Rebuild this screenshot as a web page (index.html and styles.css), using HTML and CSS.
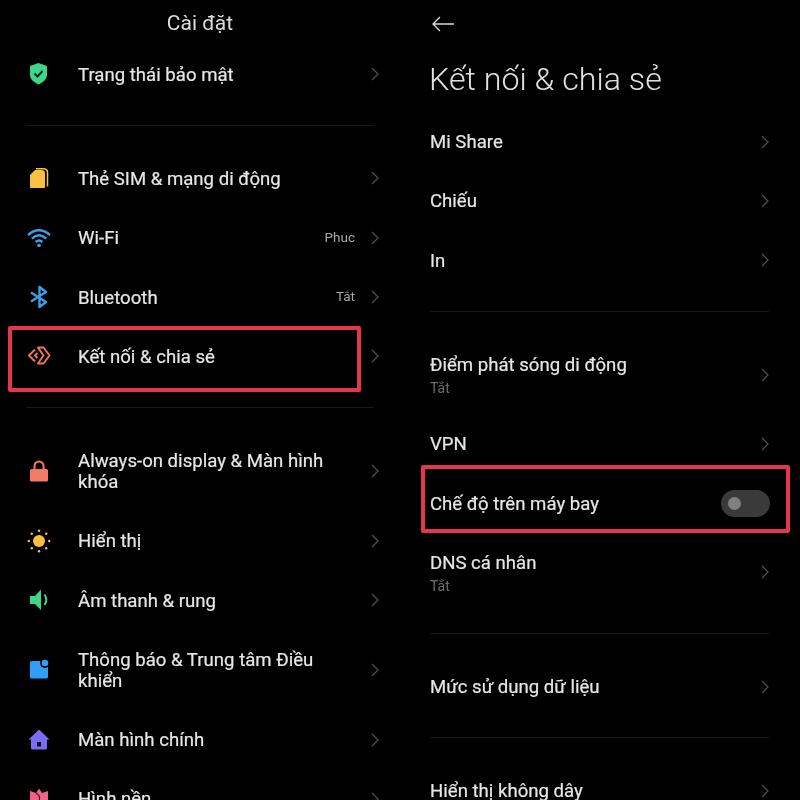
FILE: index.html
```html
<!DOCTYPE html>
<html lang="vi">

<head>
    <meta charset="UTF-8">
    <meta name="viewport" content="width=device-width, initial-scale=1.0">
    <title>Cài đặt</title>
    <link rel="stylesheet" href="styles.css">
</head>

<body>
    <div class="screens">
        <!-- Cài đặt -->
        <section class="panel panel-settings">
            <h1 class="settings-title">Cài đặt</h1>

            <div class="row">
                <svg class="icon" viewBox="0 0 24 24"><path fill="#3fd68a" d="M11.5 1 L20 4 V13 C20 17.5 15.5 20.5 11.5 22.5 C7.5 20.5 3 17.5 3 13 V4 Z"/><path fill="none" stroke="#06251a" stroke-width="2" d="M7.5 11.5 l3 3 l5 -5.5"/></svg>
                <span class="label">Trạng thái bảo mật</span>
                <svg class="chevron" viewBox="0 0 8 14"><path d="M1 1 L7 7 L1 13"/></svg>
            </div>

            <div class="divider"></div>

            <div class="row">
                <svg class="icon" viewBox="0 0 24 24"><path fill="#fbbf45" d="M8 4 H14.5 Q18 4 18 7.5 V21 Q18 22 17 22 H4 Q3 22 3 21 V9 Z"/><path fill="none" stroke="#fbbf45" stroke-width="1.5" d="M9 2.7 H17 Q20.5 3 20.5 6.5 V20.5"/></svg>
                <span class="label">Thẻ SIM &amp; mạng di động</span>
                <svg class="chevron" viewBox="0 0 8 14"><path d="M1 1 L7 7 L1 13"/></svg>
            </div>
            <div class="row">
                <svg class="icon" viewBox="0 0 24 24"><g fill="none" stroke="#3d9fe8" stroke-width="2.4"><path d="M1 9 Q12 -0.5 23 9"/><path d="M4.8 12.6 Q12 6 19.2 12.6"/><path d="M8.6 16 Q12 13 15.4 16"/></g><circle cx="12" cy="19.5" r="1.8" fill="#3d9fe8"/></svg>
                <span class="label">Wi-Fi</span>
                <span class="value">Phuc</span>
                <svg class="chevron" viewBox="0 0 8 14"><path d="M1 1 L7 7 L1 13"/></svg>
            </div>
            <div class="row">
                <svg class="icon" viewBox="0 0 24 24"><path fill="none" stroke="#3d9fe8" stroke-width="2.4" stroke-linejoin="round" d="M4 7.5 L19 17 L12.5 22 V2 L19 7 L4 16.5"/></svg>
                <span class="label">Bluetooth</span>
                <span class="value">Tắt</span>
                <svg class="chevron" viewBox="0 0 8 14"><path d="M1 1 L7 7 L1 13"/></svg>
            </div>
            <div class="row">
                <svg class="icon" viewBox="0 0 24 24"><g fill="none" stroke="#e8735f" stroke-width="2" stroke-linejoin="round"><path d="M11 3.5 H16.5 L22.5 11.5 L16.5 19.5 H11 L16.5 11.5 Z"/><path d="M8 5.5 L2 11.5 L8 17.5"/><path d="M10.5 9 L8 11.5 L10.5 14"/></g></svg>
                <span class="label">Kết nối &amp; chia sẻ</span>
                <svg class="chevron" viewBox="0 0 8 14"><path d="M1 1 L7 7 L1 13"/></svg>
                <div class="highlight highlight-share"></div>
            </div>

            <div class="divider"></div>

            <div class="row row-tall">
                <svg class="icon" viewBox="0 0 24 24"><rect x="3" y="10" width="18" height="12.5" rx="1.5" fill="#f47c67"/><path fill="none" stroke="#f47c67" stroke-width="2" d="M7.5 11 V7 a4.5 4.5 0 0 1 9 0 V11"/></svg>
                <span class="label">Always-on display &amp; Màn hình khóa</span>
                <svg class="chevron" viewBox="0 0 8 14"><path d="M1 1 L7 7 L1 13"/></svg>
            </div>
            <div class="row">
                <svg class="icon" viewBox="0 0 24 24"><circle cx="12" cy="12" r="6" fill="#fbbf45"/><g fill="#fbbf45"><circle cx="12" cy="1.8" r="1.2"/><circle cx="12" cy="22.2" r="1.2"/><circle cx="1.8" cy="12" r="1.2"/><circle cx="22.2" cy="12" r="1.2"/><circle cx="4.8" cy="4.8" r="1.2"/><circle cx="19.2" cy="4.8" r="1.2"/><circle cx="4.8" cy="19.2" r="1.2"/><circle cx="19.2" cy="19.2" r="1.2"/></g></svg>
                <span class="label">Hiển thị</span>
                <svg class="chevron" viewBox="0 0 8 14"><path d="M1 1 L7 7 L1 13"/></svg>
            </div>
            <div class="row">
                <svg class="icon" viewBox="0 0 24 24"><path fill="#3fd68a" d="M3 8 H8 L14 1.5 V22 L8 16 H3 Z"/><path fill="none" stroke="#3fd68a" stroke-width="2" d="M17.5 6.5 Q21 11.5 17.5 17"/></svg>
                <span class="label">Âm thanh &amp; rung</span>
                <svg class="chevron" viewBox="0 0 8 14"><path d="M1 1 L7 7 L1 13"/></svg>
            </div>
            <div class="row row-tall">
                <svg class="icon" viewBox="0 0 24 24"><rect x="3" y="3" width="18" height="17.5" rx="1.5" fill="#2f9ff5"/><circle cx="18" cy="5" r="5" fill="#000"/><circle cx="18" cy="5" r="3.3" fill="#2f9ff5"/></svg>
                <span class="label">Thông báo &amp; Trung tâm Điều khiển</span>
                <svg class="chevron" viewBox="0 0 8 14"><path d="M1 1 L7 7 L1 13"/></svg>
            </div>
            <div class="row">
                <svg class="icon" viewBox="0 0 24 24"><path fill="#7c6cf0" d="M12 1.5 L22.5 11.5 H20 V20 Q20 21.5 18.5 21.5 H5.5 Q4 21.5 4 20 V11.5 H1.5 Z"/><rect x="10" y="14" width="4" height="4.5" fill="#0d0a26"/></svg>
                <span class="label">Màn hình chính</span>
                <svg class="chevron" viewBox="0 0 8 14"><path d="M1 1 L7 7 L1 13"/></svg>
            </div>
            <div class="row">
                <svg class="icon" viewBox="0 0 24 24"><path fill="#f0648a" d="M3 4 L9 6 L12 1.5 L15 6 L21 4 V16 Q21 22 12 22 Q3 22 3 16 Z"/><path fill="none" stroke="#4a1526" stroke-width="1.2" d="M9 6 Q14 9 12 14"/></svg>
                <span class="label">Hình nền</span>
                <svg class="chevron" viewBox="0 0 8 14"><path d="M1 1 L7 7 L1 13"/></svg>
            </div>
        </section>

        <!-- Kết nối & chia sẻ -->
        <section class="panel panel-connect">
            <svg class="back" viewBox="0 0 22 16"><path d="M8 1 L1 8 L8 15 M1 8 H22"/></svg>
            <h2 class="connect-title">Kết nối &amp; chia sẻ</h2>

            <div class="row">
                <span class="label">Mi Share</span>
                <svg class="chevron" viewBox="0 0 8 14"><path d="M1 1 L7 7 L1 13"/></svg>
            </div>
            <div class="row">
                <span class="label">Chiếu</span>
                <svg class="chevron" viewBox="0 0 8 14"><path d="M1 1 L7 7 L1 13"/></svg>
            </div>
            <div class="row">
                <span class="label">In</span>
                <svg class="chevron" viewBox="0 0 8 14"><path d="M1 1 L7 7 L1 13"/></svg>
            </div>

            <div class="divider"></div>

            <div class="row row-sub">
                <div class="label">Điểm phát sóng di động<div class="sub">Tắt</div></div>
                <svg class="chevron" viewBox="0 0 8 14"><path d="M1 1 L7 7 L1 13"/></svg>
            </div>
            <div class="row">
                <span class="label">VPN</span>
                <svg class="chevron" viewBox="0 0 8 14"><path d="M1 1 L7 7 L1 13"/></svg>
            </div>
            <div class="row">
                <span class="label">Chế độ trên máy bay</span>
                <div class="toggle"><div class="knob"></div></div>
                <div class="highlight highlight-plane"></div>
            </div>
            <div class="row row-sub">
                <div class="label">DNS cá nhân<div class="sub">Tắt</div></div>
                <svg class="chevron" viewBox="0 0 8 14"><path d="M1 1 L7 7 L1 13"/></svg>
            </div>

            <div class="divider"></div>

            <div class="row">
                <span class="label">Mức sử dụng dữ liệu</span>
                <svg class="chevron" viewBox="0 0 8 14"><path d="M1 1 L7 7 L1 13"/></svg>
            </div>

            <div class="divider"></div>

            <div class="row">
                <span class="label">Hiển thị không dây</span>
                <svg class="chevron" viewBox="0 0 8 14"><path d="M1 1 L7 7 L1 13"/></svg>
            </div>
        </section>
    </div>
</body>

</html>
```

FILE: styles.css
```css
html,
body {
    margin: 0;
    height: 800px;
    overflow: hidden;
    background-color: #000;
}

body {
    font-family: Roboto, "Noto Sans", sans-serif;
    color: #e6e6e6;
}

/* the reference is a soft, upscaled phone capture */
.screens {
    display: grid;
    grid-template-columns: 400px 400px;
    height: 800px;
    overflow: hidden;
    filter: blur(0.4px);
}

.panel {
    display: flex;
    flex-direction: column;
    box-sizing: border-box;
}

.panel-settings {
    padding: 0 21px 0 27px;
}

.panel-connect {
    padding: 0 31px 0 30px;
}

.settings-title {
    margin: 0 6px 0 0;
    height: 44.6px;
    line-height: 46px;
    font-size: 21px;
    font-weight: 400;
    text-align: center;
    color: #dcdcdc;
    flex-shrink: 0;
}

.back {
    width: 22px;
    height: 16px;
    margin: 16px 0 0 2px;
    flex-shrink: 0;
    fill: none;
    stroke: #d8d8d8;
    stroke-width: 1.4;
}

.connect-title {
    box-sizing: border-box;
    margin: 0 0 0 -1px;
    height: 80px;
    padding-top: 8px;
    line-height: 78px;
    font-size: 32.2px;
    font-weight: 300;
    color: #e0e0e0;
    flex-shrink: 0;
}

.row {
    position: relative;
    display: flex;
    align-items: center;
    min-height: 59.2px;
    flex-shrink: 0;
}

.panel-connect .row {
    min-height: 59.4px;
}

.panel-settings .row-tall {
    min-height: 80.5px;
}

.panel-connect .row-sub {
    min-height: 79px;
}

.icon {
    width: 24px;
    height: 24px;
    margin-right: 27px;
    flex-shrink: 0;
}

.label {
    flex: 1;
    font-size: 18.6px;
    line-height: 21.5px;
    padding-right: 24px;
    color: #e6e6e6;
    -webkit-text-stroke: 0.2px #e6e6e6;
}

.panel-settings .label {
    padding-top: 3px;
}

.panel-connect .label {
    padding-top: 2px;
}

.panel-connect .row-sub .label {
    padding-top: 5px;
}

.sub {
    font-size: 14px;
    line-height: 22px;
    color: #6e6e6e;
    -webkit-text-stroke: 0;
}

.value {
    font-size: 13.5px;
    margin-right: 16px;
    padding-bottom: 1px;
    color: #a8a8a8;
}

.chevron {
    width: 8px;
    height: 14px;
    flex-shrink: 0;
    fill: none;
    stroke: #525252;
    stroke-width: 1.2;
}

.divider {
    height: 1px;
    margin: 21px 0 23px;
    background-color: #191919;
    flex-shrink: 0;
}

.panel-settings .divider {
    margin-right: 6px;
}

.toggle {
    display: flex;
    align-items: center;
    box-sizing: border-box;
    width: 49px;
    height: 27px;
    padding-left: 7px;
    margin-right: -1px;
    border-radius: 14px;
    background-color: #3a3a3a;
}

.knob {
    width: 13px;
    height: 13px;
    border-radius: 50%;
    background-color: #808080;
}

.highlight {
    position: absolute;
    box-sizing: border-box;
    border: 4px solid #e6364c;
    border-radius: 2px;
}

.highlight-share {
    top: 0;
    bottom: -6.5px;
    left: -19px;
    right: 18px;
}

.highlight-plane {
    top: -9px;
    bottom: 0;
    left: -9px;
    right: -21px;
}
```
